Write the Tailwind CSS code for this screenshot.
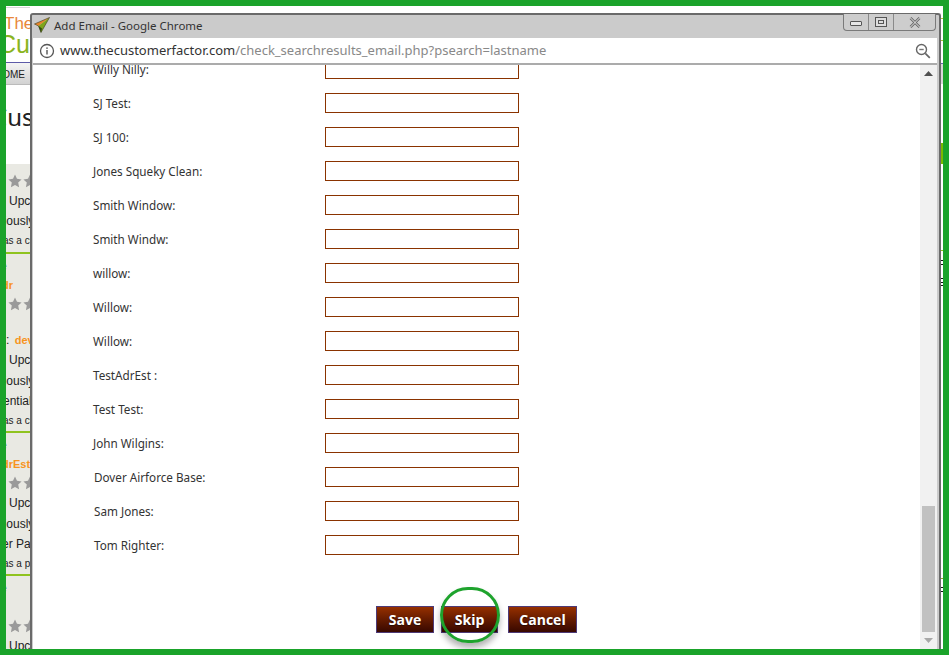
<!DOCTYPE html>
<html>
<head>
<meta charset="utf-8">
<script src="https://cdn.jsdelivr.net/npm/@tailwindcss/browser@4"></script>
</head>
<body class="m-0 overflow-hidden bg-white">
<div class="relative w-[949px] h-[655px] overflow-hidden bg-white font-['Noto_Sans',sans-serif]">
  <!-- page behind the popup -->
  <div class="flex h-full pt-[6px] pb-[6px] pl-[6px] pr-[6px]">
    <div class="w-[24px] shrink-0 overflow-hidden flex flex-col">
      <div class="h-[1px] mt-[1px] shrink-0 bg-[#d8d8d8]"></div>
      <div class="h-[54px] shrink-0 pt-[7px] font-['Liberation_Sans',sans-serif] whitespace-nowrap">
        <div class="text-[#e8873a] text-[17px] leading-[18px]"><span class="ml-[-2px] inline-block">The</span></div>
        <div class="text-[#8ab41e] text-[25px] leading-[22px]"><span class="ml-[-8px] inline-block">Cu</span></div>
      </div>
      <div class="h-[1px] shrink-0 bg-[#5c5aa8]"></div>
      <div class="h-[22px] shrink-0 bg-gradient-to-b from-[#f4f4f4] to-[#d2d2d2] border-b border-[#bbbbbb] text-[10px] leading-[23px] font-['Liberation_Sans',sans-serif] text-[#222] whitespace-nowrap"><span class="ml-[-11px] inline-block">HOME</span></div>
      <div class="h-[79px] shrink-0 bg-white text-[24px] leading-[64px] text-[#222] whitespace-nowrap"><span class="ml-[-14px] inline-block">Cus</span></div>
      <div class="flex-1 min-h-0 bg-[#e9e9e3] text-[12px] leading-[20px] text-[#222] whitespace-nowrap font-['Liberation_Sans',sans-serif] pt-[7px]">
        <div class="h-[20px] pl-[2px] flex gap-[1px] items-center"><svg width="14" height="14" viewBox="0 0 24 24" class="shrink-0"><path fill="#9a9a9a" d="M12 1l3.400 7.300 7.900 1-5.800 5.400 1.500 7.900L12 18.700l-7 3.900 1.500-7.900L.7 9.300l7.900-1z"/></svg><svg width="14" height="14" viewBox="0 0 24 24" class="shrink-0"><path fill="#9a9a9a" d="M12 1l3.400 7.300 7.900 1-5.800 5.400 1.500 7.900L12 18.700l-7 3.900 1.500-7.900L.7 9.300l7.900-1z"/></svg></div>
        <div class="h-[20px] pl-[3px]">Upcoming</div>
        <div class="h-[20px]"><span class="ml-[-27px] inline-block">Previously</span></div>
        <div class="h-[20px] text-[10px]"><span class="ml-[-3px] inline-block">as a customer</span></div>
        <div class="h-[2px] mt-[1px] bg-[#8fc31f]"></div>
        <div class="h-[19px] mt-[2px]"><span class="ml-[-6px] inline-block">e</span></div>
        <div class="h-[19px] text-[#f7941d] font-bold text-[11px]"><span class="ml-[-4px] inline-block">dr</span></div>
        <div class="h-[20px] pl-[2px] flex gap-[1px] items-center"><svg width="14" height="14" viewBox="0 0 24 24" class="shrink-0"><path fill="#9a9a9a" d="M12 1l3.400 7.300 7.900 1-5.800 5.400 1.500 7.900L12 18.700l-7 3.900 1.500-7.900L.7 9.300l7.900-1z"/></svg><svg width="14" height="14" viewBox="0 0 24 24" class="shrink-0"><path fill="#9a9a9a" d="M12 1l3.400 7.300 7.900 1-5.800 5.400 1.500 7.900L12 18.700l-7 3.900 1.500-7.900L.7 9.300l7.900-1z"/></svg></div>
        <div class="h-[16px]"></div>
        <div class="h-[20px]"><span class="inline-block">: <b class="text-[#f7941d] text-[11px] ml-[2px]">dev</b></span></div>
        <div class="h-[21px] pl-[3px]">Upcoming</div>
        <div class="h-[20px]"><span class="ml-[-27px] inline-block">Previously</span></div>
        <div class="h-[20px]"><span class="ml-[-3px] inline-block">entials</span></div>
        <div class="h-[20px] text-[10px]"><span class="ml-[-3px] inline-block">as a customer</span></div>
        <div class="h-[2px] bg-[#8fc31f]"></div>
        <div class="h-[19px] mt-[2px]"><span class="ml-[-6px] inline-block">e</span></div>
        <div class="h-[19px] text-[#f7941d] font-bold text-[11px]"><span class="ml-[-4px] inline-block">drEst</span></div>
        <div class="h-[20px] pl-[2px] flex gap-[1px] items-center"><svg width="14" height="14" viewBox="0 0 24 24" class="shrink-0"><path fill="#9a9a9a" d="M12 1l3.400 7.300 7.900 1-5.800 5.400 1.500 7.900L12 18.700l-7 3.900 1.500-7.900L.7 9.300l7.900-1z"/></svg><svg width="14" height="14" viewBox="0 0 24 24" class="shrink-0"><path fill="#9a9a9a" d="M12 1l3.400 7.300 7.900 1-5.800 5.400 1.500 7.900L12 18.700l-7 3.900 1.500-7.900L.7 9.300l7.900-1z"/></svg></div>
        <div class="h-[21px] pl-[3px]">Upcoming</div>
        <div class="h-[20px]"><span class="ml-[-27px] inline-block">Previously</span></div>
        <div class="h-[20px]"><span class="ml-[-4px] inline-block">er Partner</span></div>
        <div class="h-[20px] text-[10px]"><span class="ml-[-3px] inline-block">as a partner</span></div>
        <div class="h-[2px] bg-[#8fc31f]"></div>
        <div class="h-[38px] mt-[2px]"><span class="ml-[-6px] inline-block">e</span></div>
        <div class="h-[20px] pl-[2px] flex gap-[1px] items-center"><svg width="14" height="14" viewBox="0 0 24 24" class="shrink-0"><path fill="#9a9a9a" d="M12 1l3.400 7.300 7.900 1-5.800 5.400 1.500 7.900L12 18.700l-7 3.900 1.500-7.900L.7 9.300l7.900-1z"/></svg><svg width="14" height="14" viewBox="0 0 24 24" class="shrink-0"><path fill="#9a9a9a" d="M12 1l3.400 7.300 7.900 1-5.800 5.400 1.500 7.900L12 18.700l-7 3.900 1.500-7.900L.7 9.300l7.900-1z"/></svg></div>
        <div class="h-[20px] pl-[3px]">Upcoming</div>
      </div>
    </div>
    <div class="flex-1"></div>
    <div class="w-[2px] shrink-0 flex flex-col">
      <div class="h-[1px] mt-[12px] shrink-0 bg-[#b5c23a]"></div>
      <div class="h-[1px] mt-[21px] shrink-0 bg-[#a9c23a]"></div>
      <div class="h-[1px] mt-[22px] shrink-0 bg-[#6a66b0]"></div>
      <div class="h-[20px] shrink-0 bg-[#d9d9d9]"></div>
      <div class="h-[21px] mt-[59px] shrink-0 bg-[#7ab800]"></div>
      <div class="h-[1px] mt-[86px] shrink-0 bg-[#8fc31f]"></div>
      <div class="h-[1px] mt-[9px] shrink-0 bg-[#111]"></div>
      <div class="h-[1px] mt-[3px] shrink-0 bg-[#111]"></div>
      <div class="h-[1px] mt-[13px] shrink-0 bg-[#111]"></div>
      <div class="h-[1px] mt-[3px] shrink-0 bg-[#111]"></div>
      <div class="h-[1px] mt-[2px] shrink-0 bg-[#111]"></div>
      <div class="h-[1px] mt-[292px] shrink-0 bg-[#9aa52c]"></div>
      <div class="h-[1px] mt-[8px] shrink-0 bg-[#111]"></div>
      <div class="h-[1px] mt-[3px] shrink-0 bg-[#111]"></div>
    </div>
  </div>

  <!-- popup window -->
  <div class="absolute left-[30px] top-[13px] w-[911px] h-[642px] flex flex-col bg-[#cbcbcb] border-2 border-[#6a6a6a] rounded-t-[3px] border-b-0">
    <div class="h-[23px] shrink-0 flex items-start pl-[2px] pr-[3px]">
      <svg width="16" height="16" viewBox="0 0 16 16" class="mt-[2px] shrink-0">
        <path fill="#e8862a" d="M15.500 .5L.5 7l4 2z"/>
        <path fill="#7da51a" d="M15.500 .5L4.500 9l2.500 6.500z"/>
        <path fill="#2f4f08" d="M4.500 9l2.500 6.500 1-4z"/>
        <path fill="none" stroke="#3a3a20" stroke-width=".6" d="M15.500 .5L.5 7l4 2 2.500 6.500z"/>
      </svg>
      <span class="ml-[4px] text-[11.5px] leading-[22px] text-[#333] whitespace-nowrap">Add Email - Google Chrome</span>
      <div class="ml-auto w-[93px] h-[17px] mt-[-1px] flex border border-t-0 border-[#7a7a7a] rounded-b-[4px] bg-[#cdcdcd]">
        <div class="w-[25px] border-r border-[#8a8a8a] flex items-center justify-center pt-[3px]"><div class="w-[12px] h-[5px] border border-[#555] rounded-[1px] bg-[#e6e6e6]"></div></div>
        <div class="w-[25px] border-r border-[#8a8a8a] flex items-center justify-center"><div class="w-[12px] h-[10px] border border-[#555] flex items-center justify-center bg-[#ddd]"><div class="w-[6px] h-[4px] border border-[#555]"></div></div></div>
        <div class="flex-1 flex items-center justify-center"><svg width="12" height="11" viewBox="0 0 12 11"><path d="M1.500 1l9 9M10.500 1l-9 9" stroke="#666" stroke-width="2.500" fill="none"/><path d="M1.500 1l9 9M10.500 1l-9 9" stroke="#eee" stroke-width="1" fill="none"/></svg></div>
      </div>
    </div>
    <div class="flex-1 min-h-0 flex flex-col mx-[1px] mr-[2px] bg-white overflow-hidden">
      <div class="h-[27px] shrink-0 flex items-center border-b-2 border-[#ababab] pl-[6px] pr-[6px] bg-white">
        <svg width="16" height="16" viewBox="0 0 16 16" class="shrink-0">
          <circle cx="8" cy="8" r="6.500" fill="none" stroke="#555" stroke-width="1.300"/>
          <rect x="7.300" y="7" width="1.400" height="4.500" fill="#555"/>
          <rect x="7.300" y="4.400" width="1.400" height="1.500" fill="#555"/>
        </svg>
        <span class="ml-[5px] text-[13px] whitespace-nowrap text-[#333]">www.thecustomerfactor.com<span class="text-[#888]">/check_searchresults_email.php?psearch=lastname</span></span>
        <svg width="16" height="16" viewBox="0 0 16 16" class="ml-auto shrink-0">
          <circle cx="6.500" cy="6.500" r="5" fill="none" stroke="#666" stroke-width="1.400"/>
          <path d="M4.300 6.500h4.400" stroke="#777" stroke-width="1.400"/>
          <path d="M10.300 10.300l4.500 4.500" stroke="#666" stroke-width="1.700"/>
        </svg>
      </div>
      <div class="flex-1 min-h-0 flex overflow-hidden">
        <div class="flex-1 min-w-0 overflow-hidden bg-white">
          <div class="mt-[-6px] pl-[60px] flex flex-col gap-[14px] text-[11.7px] text-[#333]">
            <div class="flex items-center h-[20px]"><span class="w-[232px] pt-[1px]">Willy Nilly:</span><div class="w-[194px] h-[20px] border border-[#8a3300]"></div></div>
            <div class="flex items-center h-[20px]"><span class="w-[232px] pt-[1px]">SJ Test:</span><div class="w-[194px] h-[20px] border border-[#8a3300]"></div></div>
            <div class="flex items-center h-[20px]"><span class="w-[232px] pt-[1px]">SJ 100:</span><div class="w-[194px] h-[20px] border border-[#8a3300]"></div></div>
            <div class="flex items-center h-[20px]"><span class="w-[232px] pt-[1px]">Jones Squeky Clean:</span><div class="w-[194px] h-[20px] border border-[#8a3300]"></div></div>
            <div class="flex items-center h-[20px]"><span class="w-[232px] pt-[1px]">Smith Window:</span><div class="w-[194px] h-[20px] border border-[#8a3300]"></div></div>
            <div class="flex items-center h-[20px]"><span class="w-[232px] pt-[1px]">Smith Windw:</span><div class="w-[194px] h-[20px] border border-[#8a3300]"></div></div>
            <div class="flex items-center h-[20px]"><span class="w-[232px] pt-[1px]">willow:</span><div class="w-[194px] h-[20px] border border-[#8a3300]"></div></div>
            <div class="flex items-center h-[20px]"><span class="w-[232px] pt-[1px]">Willow:</span><div class="w-[194px] h-[20px] border border-[#8a3300]"></div></div>
            <div class="flex items-center h-[20px]"><span class="w-[232px] pt-[1px]">Willow:</span><div class="w-[194px] h-[20px] border border-[#8a3300]"></div></div>
            <div class="flex items-center h-[20px]"><span class="w-[232px] pt-[1px]">TestAdrEst :</span><div class="w-[194px] h-[20px] border border-[#8a3300]"></div></div>
            <div class="flex items-center h-[20px]"><span class="w-[232px] pt-[1px]">Test Test:</span><div class="w-[194px] h-[20px] border border-[#8a3300]"></div></div>
            <div class="flex items-center h-[20px]"><span class="w-[232px] pt-[1px]">John Wilgins:</span><div class="w-[194px] h-[20px] border border-[#8a3300]"></div></div>
            <div class="flex items-center h-[20px]"><span class="w-[232px] pt-[1px] pl-[1px]">Dover Airforce Base:</span><div class="w-[194px] h-[20px] border border-[#8a3300]"></div></div>
            <div class="flex items-center h-[20px]"><span class="w-[232px] pt-[1px] pl-[1px]">Sam Jones:</span><div class="w-[194px] h-[20px] border border-[#8a3300]"></div></div>
            <div class="flex items-center h-[20px]"><span class="w-[232px] pt-[1px] pl-[1px]">Tom Righter:</span><div class="w-[194px] h-[20px] border border-[#8a3300]"></div></div>
            <div class="flex mt-[37px] pl-[283px] font-['Open_Sans',sans-serif] text-[14px] font-bold text-white [text-shadow:0_1px_1px_rgba(0,0,0,0.5)]">
              <div class="w-[58px] h-[27px] flex items-center justify-center bg-gradient-to-b from-[#963000] to-[#380800] border border-[#4d3a78]">Save</div>
              <div class="w-[57px] h-[27px] ml-[7px] flex items-center justify-center bg-gradient-to-b from-[#963000] to-[#380800] border border-[#4d3a78]">Skip</div>
              <div class="w-[69px] h-[27px] ml-[10px] flex items-center justify-center bg-gradient-to-b from-[#963000] to-[#380800] border border-[#4d3a78]">Cancel</div>
            </div>
          </div>
        </div>
        <div class="w-[17px] shrink-0 bg-[#f1f1f1] flex flex-col items-center pt-[6px]">
          <svg width="9" height="5" viewBox="0 0 9 5"><path d="M4.500 0L9 5H0z" fill="#505050"/></svg>
          <div class="w-[13px] h-[126px] mt-[430px] bg-[#c1c1c1]"></div>
          <svg width="9" height="5" viewBox="0 0 9 5" class="mt-[6px]"><path d="M0 0h9L4.500 5z" fill="#a8a8a8"/></svg>
        </div>
      </div>
    </div>
  </div>

  <!-- green highlight circle drawn over the Skip button -->
  <div class="absolute left-[440px] top-[587px] w-[60px] h-[56px] rounded-full border-[3px] border-[#1ea32d] shadow-[0_5px_6px_rgba(0,0,0,0.3)]"></div>
  <!-- green annotation frame -->
  <div class="absolute inset-0 border-[6px] border-[#1aa32a] pointer-events-none"></div>
</div>
</body>
</html>
